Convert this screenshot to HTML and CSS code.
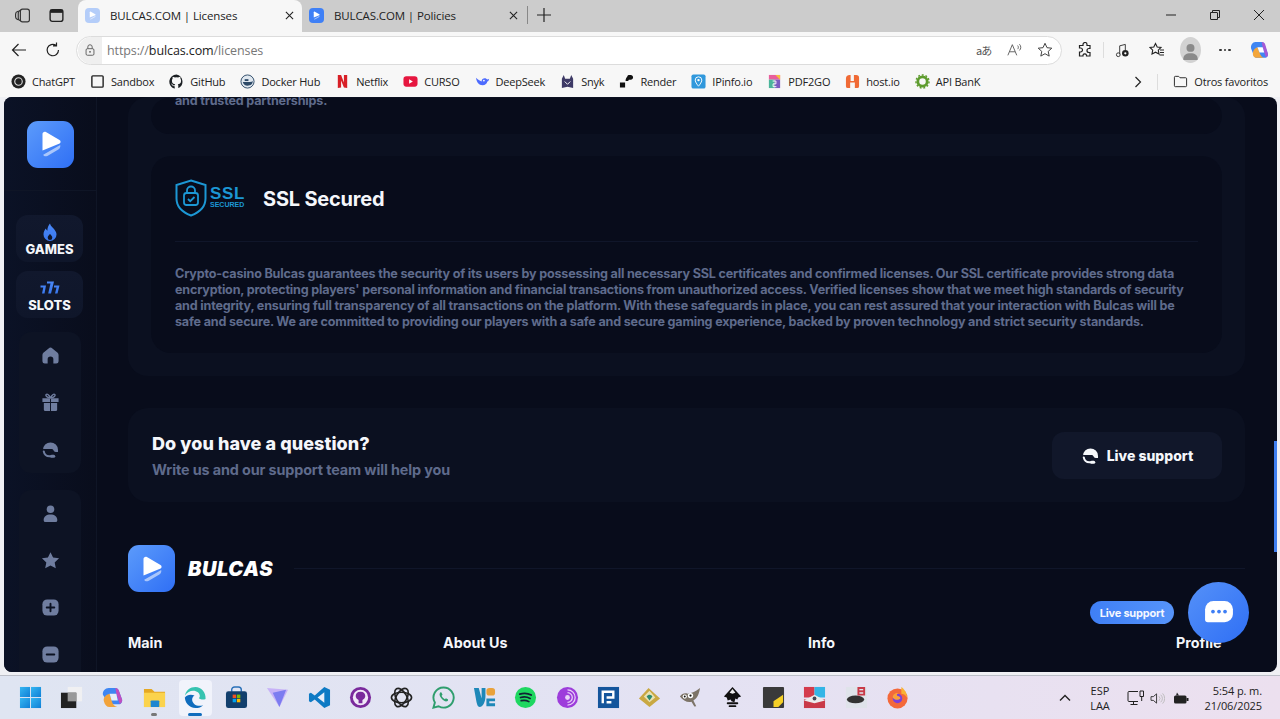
FILE: index.html
```html
<!DOCTYPE html>
<html lang="en">
<head>
<meta charset="utf-8">
<title>BULCAS.COM | Licenses</title>
<link rel="stylesheet" href="styles.css">
</head>
<body>
<svg class="defs" width="0" height="0">
  <defs>
    <linearGradient id="flame" x1="0" y1="0" x2="0" y2="1"><stop offset="0" stop-color="#4a88f7"/><stop offset="1" stop-color="#3a78ee"/></linearGradient>
    <linearGradient id="winlogo" x1="0" y1="0" x2="1" y2="1"><stop offset="0" stop-color="#35b6f2"/><stop offset="1" stop-color="#0f7fd6"/></linearGradient>
    <symbol id="play" viewBox="0 0 24 24">
      <path d="M6 5c0-1.300 1.300-2 2.400-1.400l9.600 5.600c1 .6 1 1.800.1 2.400L6 16.500z" fill="#fff"/>
      <path d="M6.500 19.500 18.500 12.700c.3 1.500-.3 2.600-1.300 3.200l-7.800 4.500c-1.200.7-2.500.2-2.900-.9z" fill="#fff" opacity=".55"/>
    </symbol>
    <symbol id="headset" viewBox="0 0 24 24">
      <path d="M2.500 12.500a9.500 9.500 0 0 1 19 0V15h-2.800c-1.500 0-2.400-1-3.200-2.500-.4-.7-1-1-1.800-1H2.500z" fill="currentColor"/>
      <path d="M3.500 14.500c.5 3.500 3.500 6 7 6h3.500" fill="none" stroke="currentColor" stroke-width="2.600" stroke-linecap="round"/>
      <path d="M11.500 20.500a2 2 0 0 1 2-2h2.500a2 2 0 0 1 0 4h-2.500a2 2 0 0 1-2-2z" fill="currentColor"/>
    </symbol>
  </defs>
</svg>

<header class="tabstrip">
  <svg class="chrome-icon workspaces" viewBox="0 0 16 16"><rect x="6" y="2" width="8.500" height="12" rx="2" fill="none" stroke="#333" stroke-width="1.100"/><path d="M6 3.200C4.700 3.500 4 4.300 4 5.500v5c0 1.200.7 2 2 2.300M3.800 4C2.300 4.500 1.500 5.300 1.500 6.500v3c0 1.200.8 2 2.300 2.500" fill="none" stroke="#333" stroke-width="1.100"/></svg>
  <svg class="chrome-icon tabs-icon" viewBox="0 0 16 16"><rect x="2" y="2.500" width="12" height="11" rx="2" fill="none" stroke="#222" stroke-width="1.300"/><rect x="2" y="2.500" width="12" height="3" fill="#222"/></svg>
  <div class="tab tab-active">
    <span class="favicon favicon-faded"><svg viewBox="0 0 24 24"><use href="#play"/></svg></span>
    <span class="tab-title">BULCAS.COM | Licenses</span>
    <svg class="tab-close" viewBox="0 0 10 10"><path d="M1 1l8 8M9 1l-8 8" stroke="#222" stroke-width="1.200"/></svg>
  </div>
  <div class="tab">
    <span class="favicon"><svg viewBox="0 0 24 24"><use href="#play"/></svg></span>
    <span class="tab-title">BULCAS.COM | Policies</span>
    <svg class="tab-close" viewBox="0 0 10 10"><path d="M1 1l8 8M9 1l-8 8" stroke="#222" stroke-width="1.200"/></svg>
  </div>
  <span class="tab-sep"></span>
  <svg class="new-tab" viewBox="0 0 14 14"><path d="M7 0v14M0 7h14" stroke="#222" stroke-width="1.200"/></svg>
  <div class="window-controls">
    <svg viewBox="0 0 10 10"><path d="M0 5h10" stroke="#222"/></svg>
    <svg viewBox="0 0 10 10"><path d="M.5 2.500h6.500a.5.5 0 0 1 .5.5v6.500H1a.5.5 0 0 1-.5-.5zM2.500 2.500V.5h7v7H7.500" fill="none" stroke="#222"/></svg>
    <svg viewBox="0 0 10 10"><path d="M0 0l10 10M10 0L0 10" stroke="#222"/></svg>
  </div>
</header>

<nav class="toolbar">
  <svg class="tool back" viewBox="0 0 16 16"><path d="M15 8H1.500M7.500 2 1.500 8l6 6" fill="none" stroke="#222" stroke-width="1.200"/></svg>
  <svg class="tool reload" viewBox="0 0 16 16"><path d="M13.500 8A5.700 5.700 0 1 1 11 3.300M11.500 .5v3.300H8" fill="none" stroke="#222" stroke-width="1.200"/></svg>
  <div class="address">
    <span class="lock"><svg viewBox="0 0 16 16"><rect x="3.500" y="6.500" width="9" height="7.500" rx="1.500" fill="none" stroke="#555"/><path d="M5.500 6.500V4.500a2.500 2.500 0 0 1 5 0v2" fill="none" stroke="#555"/><circle cx="8" cy="10" r="1" fill="#555"/></svg></span>
    <span class="url"><span class="url-dim">https://</span>bulcas.com<span class="url-dim">/licenses</span></span>
    <span class="address-tools">
      <span class="translate">aあ</span>
      <svg viewBox="0 0 18 16"><path d="M1 14 6 2l5 12M3 10h6M12 3c1 1 1 3 0 4M14 1.500c2 2 2 5 0 7" fill="none" stroke="#555"/></svg>
      <svg viewBox="0 0 16 16"><path d="M8 1.300l2 4.400 4.800.5-3.600 3.200 1 4.700L8 11.700l-4.200 2.400 1-4.700L1.200 6.200 6 5.700z" fill="none" stroke="#444"/></svg>
    </span>
  </div>
  <svg class="tool ext" viewBox="0 0 16 16"><path d="M6 2.500a2 2 0 0 1 4 0v1h3v3h-1a2 2 0 0 0 0 4h1v3.500H9.500v-1a2 2 0 0 0-3.500 0v1H2.500V10h1a2 2 0 0 0 0-4h-1V3.500H6z" fill="none" stroke="#222" stroke-width="1.200"/></svg>
  <span class="tool-sep"></span>
  <svg class="tool music" viewBox="0 0 16 16"><path d="M5 12V3l6-1.500v6" fill="none" stroke="#333"/><circle cx="3.500" cy="12.500" r="2" fill="none" stroke="#333"/><circle cx="11" cy="11" r="3.500" fill="#222"/><circle cx="11" cy="11" r="1.200" fill="#fff"/></svg>
  <svg class="tool fav" viewBox="0 0 16 16"><path d="M6.500 1.500 8.200 5l3.800.5-2.700 2.700.7 3.800-3.500-1.800L3 12l.7-3.800L1 5.500 4.800 5zM11 8h4M11 10.500h4M10.500 13h4.500" fill="none" stroke="#222" stroke-width="1.100"/></svg>
  <span class="avatar"><svg viewBox="0 0 20 20"><circle cx="10" cy="7.500" r="3.800" fill="#8a8a8a"/><path d="M3 19c0-5 3-6.500 7-6.500s7 1.500 7 6.500z" fill="#8a8a8a"/></svg></span>
  <span class="dots"><i></i><i></i><i></i></span>
  <svg class="tool copilot" viewBox="0 0 20 20"><path d="M6 2h6c2 0 2.500 1 3 2.500L18 13c.6 2-1 4-3 4H8c-2 0-3-1-3.500-2.500L2 8c-.6-3 1.500-6 4-6z" fill="#3f86f2"/><path d="M12 2c2 0 3 1 3.500 2.500L18 13c.3 1.500-.6 3-2 3.500L13 7z" fill="#a45ad6"/><path d="M4 15c1 2 2.500 2 4 2h6c-2-1-3-2-4-5L8 7C5 8 3 11 4 15z" fill="#f3a63c"/><path d="M8 7l5 0 1.500 5H10z" fill="#fff"/></svg>
</nav>

<nav class="bookmarks">
  <a class="bm"><svg viewBox="0 0 16 16"><circle cx="8" cy="8" r="7.500" fill="#222"/><circle cx="8" cy="8" r="4" fill="none" stroke="#ddd" stroke-width="1.200"/></svg>ChatGPT</a>
  <a class="bm"><svg viewBox="0 0 16 16"><rect x="2" y="2" width="12" height="12" rx="1" fill="none" stroke="#222" stroke-width="1.500"/></svg>Sandbox</a>
  <a class="bm"><svg viewBox="0 0 16 16"><path d="M8 .5a7.700 7.700 0 0 0-2.400 15c.4.1.5-.2.5-.4v-2c-2 .4-2.600-1-2.600-1-.4-.9-.9-1.100-.9-1.100-.7-.5 0-.5 0-.5.800 0 1.200.8 1.200.8.700 1.200 1.900.9 2.300.7 0-.5.300-.9.500-1.100-1.700-.2-3.500-.9-3.500-3.800 0-.8.300-1.500.8-2-.1-.2-.3-1 .1-2.100 0 0 .6-.2 2.100.8a7 7 0 0 1 3.800 0c1.500-1 2.100-.8 2.100-.8.400 1.100.2 1.900.1 2.100.5.500.8 1.200.8 2 0 2.900-1.800 3.600-3.500 3.800.3.200.5.700.5 1.400v2.100c0 .2.100.5.500.4A7.700 7.700 0 0 0 8 .5z" fill="#1b1f23"/></svg>GitHub</a>
  <a class="bm"><svg viewBox="0 0 16 16"><circle cx="8" cy="8" r="7" fill="#dfe7ef" stroke="#2d4a68"/><path d="M3 8.500h8c1 0 2-.5 2.500-1 .3 3-2 5-5.500 5-2.500 0-4.500-1.500-5-4z" fill="#2d4a68"/><rect x="5" y="5.500" width="4" height="2" fill="#2d4a68"/></svg>Docker Hub</a>
  <a class="bm"><svg viewBox="0 0 16 16"><path d="M3 1h3.500l3 8V1H13v14l-3.500-.5L6.500 7v7.500L3 15z" fill="#d81f26"/></svg>Netflix</a>
  <a class="bm"><svg viewBox="0 0 16 16"><rect x=".5" y="2.500" width="15" height="11" rx="3" fill="#e6163f"/><path d="M6.500 5.500v5l4-2.500z" fill="#fff"/></svg>CURSO</a>
  <a class="bm"><svg viewBox="0 0 16 16"><path d="M1 4c1 5 3 8 7 8 3 0 5-2 5-4 1 0 2-1 2-3-1 1-2 1-3 0-2-1-5 0-5 3C5 7 3 6 1 4z" fill="#4d6bfe"/><circle cx="9.500" cy="7" r=".9" fill="#fff"/></svg>DeepSeek</a>
  <a class="bm"><svg viewBox="0 0 16 16"><path d="M2 15V5l2-4 1.500 4h5L12 1l2 4v10l-6-1.500z" fill="#3e3a66"/><path d="M5 8l3 3 3-3" fill="none" stroke="#fff"/></svg>Snyk</a>
  <a class="bm"><svg viewBox="0 0 16 16"><path d="M9 2.500C9 1.500 10 1 11 1h1.500C14 1 15 2 15 3.500S14 6 12.500 6H11c-.5 0-1 .5-1 1v.5H7C7 5 8 4 9 2.500zM1 9h5.500v5.500H1z" fill="#111"/></svg>Render</a>
  <a class="bm"><svg viewBox="0 0 16 16"><rect x=".5" y=".5" width="15" height="15" rx="2" fill="#3098dc"/><path d="M8 3a3.500 3.500 0 0 0-3.500 3.500C4.500 9 8 13 8 13s3.500-4 3.500-6.500A3.500 3.500 0 0 0 8 3z" fill="none" stroke="#fff"/><circle cx="8" cy="6.500" r="1.300" fill="#fff"/></svg>IPinfo.io</a>
  <a class="bm"><svg viewBox="0 0 16 16"><rect x="2" y="1" width="12" height="5" fill="#e95f9c"/><rect x="2" y="6" width="6" height="9" fill="#4bb59b"/><rect x="8" y="6" width="6" height="9" fill="#7a5cc0"/><path d="M9 1h5v5z" fill="#f5c23e"/><path d="M6 7.500h3.500v3H6.500v3H10" fill="none" stroke="#fff"/></svg>PDF2GO</a>
  <a class="bm"><svg viewBox="0 0 16 16"><path d="M5.500 15H3a2 2 0 0 1-2-2V5a4 4 0 0 1 4-4h1v6.500h3.500V1H12a3 3 0 0 1 3 3v9a2 2 0 0 1-2 2h-2.500V9h-5z" fill="#f06a35"/></svg>host.io</a>
  <a class="bm"><svg viewBox="0 0 16 16"><circle cx="8" cy="8" r="5" fill="none" stroke="#5e9c2e" stroke-width="3"/><circle cx="8" cy="8" r="7" fill="none" stroke="#5e9c2e" stroke-width="1.500" stroke-dasharray="2 2"/></svg>API BanK</a>
  <div class="bm-end">
    <svg class="bm-chevron" viewBox="0 0 8 12"><path d="M1.500 1l5 5-5 5" fill="none" stroke="#222" stroke-width="1.200"/></svg>
    <span class="bm-sep"></span>
    <a class="bm"><svg viewBox="0 0 16 16"><path d="M1.500 3.500a1 1 0 0 1 1-1h3.500l1.500 1.500h6a1 1 0 0 1 1 1v7.500a1 1 0 0 1-1 1h-11a1 1 0 0 1-1-1z" fill="none" stroke="#222"/></svg>Otros favoritos</a>
  </div>
</nav>

<main class="viewport">
  <aside class="sidebar">
    <div class="side-logo">
      <span class="logo"><svg viewBox="0 0 24 24"><use href="#play"/></svg></span>
    </div>
    <div class="side-nav">
      <a class="big-link">
        <svg viewBox="0 0 16 18"><path d="M8 .5c.5 2.500 2.500 3.500 4 5.500 1.500 2 2.500 3.500 2.500 5.500a6.500 6.500 0 0 1-13 0c0-2.500 1-4.300 2.300-6 .3 1 .8 1.700 1.600 2.200C5.200 5 6.500 2.500 8 .5zM8 11c-1 1.200-2.300 2-2.300 3.700a2.300 2.300 0 0 0 4.600 0C10.300 13 9 12.200 8 11z" fill="url(#flame)" fill-rule="evenodd"/></svg>
        <span>GAMES</span>
      </a>
      <a class="big-link">
        <svg class="sevens" viewBox="0 0 20 15"><path d="M.5 5.500H6L4.500 13.500H2L3.300 7.500H.5zM7 1.500h7l-3 12H8.200L10.500 3.500H7zM14 5.500h5.500L17.500 13.500H15L16.500 7.500H14z" fill="url(#flame)"/></svg>
        <span>SLOTS</span>
      </a>
      <div class="icon-group">
        <svg viewBox="0 0 20 20"><path d="M1.500 9.500c0-1 .4-1.700 1-2.300L8 2.500a3 3 0 0 1 4 0l5.500 4.700c.6.600 1 1.300 1 2.300V16a2.500 2.500 0 0 1-2.500 2.500h-3V14a3 3 0 0 0-6 0v4.500H4A2.500 2.500 0 0 1 1.500 16z" fill="#6f7d9f"/></svg>
        <svg viewBox="0 0 20 20"><path d="M1.500 5.500h8v4h-8zM10.500 5.500h8v4h-8zM3 10.500h6.500V19H4.500A1.500 1.500 0 0 1 3 17.500zM10.500 10.500H17v7a1.500 1.500 0 0 1-1.500 1.500h-5z" fill="#6f7d9f"/><path d="M10 5C8.500 2 6.500.5 5.500 1.500S6 5 10 5c4 0 5.500-2.500 4.500-3.500S11.500 2 10 5z" fill="none" stroke="#6f7d9f" stroke-width="1.400"/></svg>
        <svg viewBox="0 0 24 24"><use href="#headset"/></svg>
      </div>
      <div class="icon-group icon-group-cut">
        <svg viewBox="0 0 20 20"><circle cx="10" cy="5.500" r="4" fill="#6f7d9f"/><path d="M2.800 17c0-4 3-6 7.200-6s7.200 2 7.200 6a2 2 0 0 1-2 2H4.800a2 2 0 0 1-2-2z" fill="#6f7d9f"/></svg>
        <svg viewBox="0 0 20 20"><path d="M10 1.200l2.700 5.700 6.300.8-4.600 4.300 1.200 6.200L10 15.200l-5.600 3 1.200-6.200L1 7.700l6.300-.8z" fill="#6f7d9f"/></svg>
        <svg viewBox="0 0 20 20"><rect x="1.500" y="1.500" width="17" height="17" rx="5" fill="#6f7d9f"/><path d="M10 6v8M6 10h8" stroke="#0c1222" stroke-width="2" stroke-linecap="round"/></svg>
        <svg viewBox="0 0 20 20"><rect x="1.500" y="1.500" width="17" height="17" rx="5" fill="#6f7d9f"/><path d="M6 10h8" stroke="#0c1222" stroke-width="2" stroke-linecap="round"/></svg>
      </div>
    </div>
  </aside>

  <div class="content">
    <section class="panel licenses">
      <article class="card card-prev">
        <p class="card-text">and trusted partnerships.</p>
      </article>
      <article class="card card-ssl">
        <div class="card-head">
          <span class="ssl-badge">
            <svg viewBox="0 0 32 38"><path d="M16 1.500 30.500 6v13.500C30.500 28 24 33.500 16 36.500 8 33.500 1.500 28 1.500 19.500V6z" fill="none" stroke="#1c97d4" stroke-width="2"/><rect x="9" y="14" width="14" height="12" rx="2.500" fill="none" stroke="#1c97d4" stroke-width="1.800"/><path d="M12 14v-2.500a4 4 0 0 1 8 0V14M13 20l2.200 2.200L19.500 18" fill="none" stroke="#1c97d4" stroke-width="1.800"/></svg>
            <span class="ssl-words"><b>SSL</b><small>SECURED</small></span>
          </span>
          <h2>SSL Secured</h2>
        </div>
        <p class="card-text">Crypto-casino Bulcas guarantees the security of its users by possessing all necessary SSL certificates and confirmed licenses. Our SSL certificate provides strong data encryption, protecting players' personal information and financial transactions from unauthorized access. Verified licenses show that we meet high standards of security and integrity, ensuring full transparency of all transactions on the platform. With these safeguards in place, you can rest assured that your interaction with Bulcas will be safe and secure. We are committed to providing our players with a safe and secure gaming experience, backed by proven technology and strict security standards.</p>
      </article>
    </section>

    <section class="panel question">
      <div class="question-text">
        <h3>Do you have a question?</h3>
        <p>Write us and our support team will help you</p>
      </div>
      <a class="support-btn"><svg viewBox="0 0 24 24"><use href="#headset"/></svg>Live support</a>
    </section>

    <div class="brand-row">
      <span class="logo"><svg viewBox="0 0 24 24"><use href="#play"/></svg></span>
      <span class="brand-name">BULCAS</span>
      <span class="brand-line"></span>
    </div>

    <div class="footer-cols">
      <h4>Main</h4>
      <h4>About Us</h4>
      <h4>Info</h4>
      <h4>Profile</h4>
    </div>
  </div>

  <div class="scroll-thumb"></div>
  <span class="chat-pill">Live support</span>
  <span class="chat-fab"><svg viewBox="0 0 32 28"><path d="M10 1h12a9 9 0 0 1 9 9v5a9 9 0 0 1-9 9H4a3 3 0 0 1-3-3V10a9 9 0 0 1 9-9z" fill="#fff"/><circle cx="9.500" cy="12.500" r="2" fill="#3f7ff5"/><circle cx="16" cy="12.500" r="2" fill="#3f7ff5"/><circle cx="22.500" cy="12.500" r="2" fill="#3f7ff5"/></svg></span>
</main>

<footer class="taskbar">
  <div class="task-icons">
    <span class="task"><svg viewBox="0 0 24 24"><g fill="url(#winlogo)"><rect x="1" y="1" width="10.500" height="10.500"/><rect x="12.500" y="1" width="10.500" height="10.500"/><rect x="1" y="12.500" width="10.500" height="10.500"/><rect x="12.500" y="12.500" width="10.500" height="10.500"/></g></svg></span>
    <span class="task"><svg viewBox="0 0 24 24"><rect x="8" y="1" width="15" height="15" fill="#f0f0f2"/><rect x="1" y="7" width="16" height="16" fill="#222"/><rect x="8" y="7" width="9" height="9" fill="#999"/></svg></span>
    <span class="task"><svg viewBox="0 0 24 24"><path d="M8 2h7c2 0 3 1 3.500 2.500L22 14c.6 2.500-1 5-3.500 5H10c-2 0-3-1-3.500-2.500L2 9c-.7-3.500 2.500-7 6-7z" fill="#3f86f2"/><path d="M15 2c2 0 3 1 3.500 2.500L22 14c.4 2-.6 4-2.500 4.800L16 8z" fill="#c04ec0"/><path d="M3 16c1 4 3 6 6 6h8c-3-1-5-3-6-7L9 8C5 9 2 12 3 16z" fill="#f2a33a"/><path d="M9 8h7l1.500 7H11z" fill="#e8f0f8"/></svg></span>
    <span class="task task-open"><svg viewBox="0 0 24 24"><path d="M1 3h8l3 3h11v16H1z" fill="#e5a823"/><rect x="1" y="7" width="22" height="15" fill="#fbd34c"/><rect x="8" y="15" width="9" height="7" rx="1" fill="#1d86d0"/></svg></span>
    <span class="task task-active"><svg viewBox="0 0 24 24"><path d="M22.500 13.500C23 6.500 18 1 12 1 6.500 1 2 4.500 1 10c2-3.500 5.500-5 8.500-5 4 0 7 2.500 7 5.500 0 1-.5 1.800-1 2.300 2 1.500 5 1.700 7 .7z" fill="#36c3b0"/><path d="M1 10c-1 7 4.500 13 11 13 3.500 0 6-1 8-3-6 2-11-1-11.500-5.500-.2-2 .8-3.700 2.500-4.700C7 8.500 3 9 1 12z" fill="#0f6cbd"/></svg></span>
    <span class="task"><svg viewBox="0 0 24 24"><path d="M7 6V4a3 3 0 0 1 3-3h4a3 3 0 0 1 3 3v2" fill="none" stroke="#2a70b8" stroke-width="1.500"/><rect x="1" y="5.500" width="22" height="17.500" rx="2.500" fill="#123f6d"/><rect x="8" y="9" width="3.600" height="3.600" fill="#f25022"/><rect x="12.400" y="9" width="3.600" height="3.600" fill="#7fba00"/><rect x="8" y="13.400" width="3.600" height="3.600" fill="#00a4ef"/><rect x="12.400" y="13.400" width="3.600" height="3.600" fill="#ffb900"/></svg></span>
    <span class="task"><svg viewBox="0 0 24 24"><path d="M1 2l22 2-9 18z" fill="#c7b2f7"/><path d="M7 7l14-3-7 18z" fill="#7c7cf0"/></svg></span>
    <span class="task"><svg viewBox="0 0 24 24"><path d="M17 1l6 3v16l-6 3L7 14l-4 3-2-1V8l2-1 4 3z" fill="#0e7ac4"/><path d="M17 6.500v11L10 12z" fill="#e8eefa"/></svg></span>
    <span class="task"><svg viewBox="0 0 24 24"><circle cx="12" cy="12" r="11" fill="#7a2a9c"/><circle cx="12" cy="12" r="8" fill="#f0e8f7"/><path d="M12 6c-3.500 0-5 2-5 4.500 0 2 1.500 3.500 3 4v3.500h4v-3.500c1.500-.5 3-2 3-4C17 8 15.500 6 12 6z" fill="#7a2a9c"/></svg></span>
    <span class="task"><svg viewBox="0 0 24 24"><g fill="none" stroke="#222" stroke-width="1.700"><ellipse cx="12" cy="12" rx="10.500" ry="5.500"/><ellipse cx="12" cy="12" rx="10.500" ry="5.500" transform="rotate(60 12 12)"/><ellipse cx="12" cy="12" rx="10.500" ry="5.500" transform="rotate(120 12 12)"/></g></svg></span>
    <span class="task"><svg viewBox="0 0 24 24"><path d="M12 1.500a10.500 10.500 0 0 0-9 15.800L1.500 22.500l5.400-1.400A10.500 10.500 0 1 0 12 1.500z" fill="none" stroke="#2f9e6e" stroke-width="2"/><path d="M8.500 7c-1 1-1 3 1 5.500s4.500 4 6 3.500 1.500-2 1-2.300l-2-1-1 1c-1.500-.5-3-2-3.500-3.500l1-1-1-2.200c-.5-.5-1.200-.5-1.500 0z" fill="#2f9e6e"/></svg></span>
    <span class="task"><svg viewBox="0 0 24 24"><path d="M1 2h5l3 11V2h4v9c0 6-3 11-6 11-2 0-3-3-3.500-6z" fill="#1e88b8"/><rect x="14" y="2" width="9" height="8" rx="3" fill="#e9a23b"/><path d="M14 13h9v3h-6v2h6v3h-9z" fill="#1e88b8"/></svg></span>
    <span class="task"><svg viewBox="0 0 24 24"><circle cx="12" cy="12" r="11" fill="#1ed760"/><path d="M6 8.500c4-1.200 8.500-1 12 1M6.800 12c3.500-1 7-.7 10 1M7.500 15.300c3-.8 5.500-.5 8 1" fill="none" stroke="#123" stroke-width="1.800" stroke-linecap="round"/></svg></span>
    <span class="task"><svg viewBox="0 0 24 24"><circle cx="12" cy="12" r="11" fill="#9d3ddb"/><g fill="none" stroke="#e9d4f8" stroke-width="1.300"><path d="M12 4a8 8 0 0 1 0 16M12 7a5 5 0 0 1 0 10"/></g><circle cx="12" cy="12" r="2.500" fill="#e9d4f8"/></svg></span>
    <span class="task"><svg viewBox="0 0 24 24"><rect x="1" y="1" width="22" height="22" fill="#14559c"/><path d="M6 18V6h11v6H10M15 17h-5" fill="none" stroke="#fff" stroke-width="2.500"/></svg></span>
    <span class="task"><svg viewBox="0 0 24 24"><path d="M1 13 11 2l12 11-11 9z" fill="#c9a842"/><path d="M6 11l6-6 6 7-6 5z" fill="#e8e2b4"/><path d="M9 11c2-3 5-2 6 0l-3 4z" fill="#2d8a6f"/></svg></span>
    <span class="task"><svg viewBox="0 0 24 24"><path d="M1 11c2-3 5-4 8-3 3-.5 8-2 13-6-1 6-3 11-7 13l3 6-2 .5-3-5c-4 1-9-1-12-5.500z" fill="#7d7468"/><circle cx="6" cy="11" r="2.200" fill="#fff"/><circle cx="12" cy="10" r="2.800" fill="#fff"/><circle cx="6" cy="11" r="1" fill="#111"/><circle cx="12" cy="10" r="1.200" fill="#111"/></svg></span>
    <span class="task"><svg viewBox="0 0 24 24"><path d="M12 1 21 11l-3 1-1 2-2-1-1 4-3-1-1-2-3 1-1-3-3-1z" fill="#111"/><path d="M12 3l3 4-3 1-3-1z" fill="#eee"/><path d="M7 18h10M9 21h6" stroke="#111" stroke-width="2" stroke-linecap="round"/></svg></span>
    <span class="task"><svg viewBox="0 0 24 24"><rect x="1" y="1" width="22" height="22" rx="1" fill="#3a3a3a"/><path d="M12 22V16l10-7v8l-5 5z" fill="#f6d027"/></svg></span>
    <span class="task"><svg viewBox="0 0 24 24"><rect x="1" y="1" width="11" height="11" fill="#d43b4c"/><rect x="12" y="1" width="11" height="11" fill="#34b5e6"/><rect x="1" y="14" width="22" height="9" fill="#c93a48"/><path d="M1 15 12 9l11 6-11 3z" fill="#ececec"/><circle cx="12" cy="13" r="2" fill="#445"/></svg></span>
    <span class="task"><svg viewBox="0 0 24 24"><rect x="1" y="1" width="22" height="22" fill="#dfe3ea"/><ellipse cx="11" cy="14" rx="9" ry="4" fill="#333"/><path d="M14 2h6v7h-6z" fill="none" stroke="#c93a48" stroke-width="2"/><path d="M14 5.500h6" stroke="#c93a48" stroke-width="2"/></svg></span>
    <span class="task"><svg viewBox="0 0 24 24"><circle cx="12" cy="13" r="10.500" fill="#f4693a"/><path d="M16 1c3 2 6 6 6 11-2-3-4-4-6-4z" fill="#f9b233"/><circle cx="12" cy="13" r="5" fill="#7d40d8"/><path d="M7 12c0-3 3-5 6-4.500-2 .5-2 2-1 3 2 0 3 1 3 2.500-2 2-6 2-8-1z" fill="#f9a13a"/></svg></span>
  </div>
  <div class="tray">
    <svg class="tray-chevron" viewBox="0 0 12 8"><path d="M1 6.500 6 1.500l5 5" fill="none" stroke="#222" stroke-width="1.400"/></svg>
    <span class="lang">ESP<br>LAA</span>
    <svg class="tray-net" viewBox="0 0 18 16"><path d="M11 1.500H2a1 1 0 0 0-1 1v8a1 1 0 0 0 1 1h9M6.500 11.500V14.500M3.500 14.500h7" fill="none" stroke="#222"/><path d="M13 1h3.500v5.500H13zM14.700 6.500V11" fill="none" stroke="#222"/></svg>
    <svg class="tray-vol" viewBox="0 0 16 14"><path d="M1 5h2.500L7 2v10L3.500 9H1z" fill="none" stroke="#333"/><path d="M9.500 4.500a3.500 3.500 0 0 1 0 5M11.500 3a6 6 0 0 1 0 8M13.500 1.500a8 8 0 0 1 0 11" fill="none" stroke="#bbb"/></svg>
    <svg class="tray-bat" viewBox="0 0 16 12"><rect x="1" y="3" width="12.500" height="8" rx="1.500" fill="#222"/><rect x="13.500" y="5.500" width="2" height="3" fill="#222"/><path d="M4 0l-1 3h3z" fill="#222"/></svg>
    <span class="clock">5:54 p. m.<br>21/06/2025</span>
  </div>
</footer>
</body>
</html>
```

FILE: styles.css
```css
* { box-sizing: border-box; }
html, body { margin: 0; height: 100%; }
body {
  width: 1280px;
  height: 719px;
  overflow: hidden;
  display: flex;
  flex-direction: column;
  background: #eff0f4;
  font-family: "Open Sans", "Noto Sans", sans-serif;
  color: #222;
}
svg { display: block; flex: none; }
.defs { position: absolute; }
p, h2, h3, h4 { margin: 0; }

/* tab strip */
.tabstrip {
  height: 32px;
  flex: none;
  display: flex;
  align-items: center;
  background: #cccccc;
  padding-left: 14px;
}
.chrome-icon { width: 17px; height: 17px; margin-bottom: 2px; }
.tabs-icon { margin-left: 17px; }
.tab {
  width: 224px;
  height: 32px;
  display: flex;
  align-items: center;
  padding: 0 7px 2px;
  font-size: 11.500px;
  letter-spacing: -.12px;
}
.tab-active {
  background: #f7f7f7;
  border-radius: 8px 8px 0 0;
  margin-left: 13px;
}
.favicon {
  width: 15px;
  height: 15px;
  border-radius: 4px;
  background: #3f80f6;
  display: flex;
  align-items: center;
  justify-content: center;
}
.favicon svg { width: 11px; height: 11px; }
.favicon-faded { background: #b4cdf9; }
.tab-title { margin-left: 10px; flex: 1; white-space: nowrap; }
.tab-close { width: 9px; height: 9px; margin-right: 1px; }
.tab-sep { width: 1px; height: 18px; background: #888; margin: 0 0 2px 1px; }
.new-tab { width: 14px; height: 14px; margin: 0 0 2px 9px; }
.window-controls {
  margin-left: auto;
  display: flex;
  gap: 34px;
  padding: 0 16px 2px 0;
}
.window-controls svg { width: 10px; height: 10px; }

/* toolbar */
.toolbar {
  height: 34px;
  flex: none;
  display: flex;
  align-items: center;
  background: #f7f7f7;
  padding: 2px 0 0 11px;
}
.tool { width: 16px; height: 16px; }
.reload { margin-left: 18px; }
.address {
  width: 986px;
  height: 29px;
  margin-left: 15px;
  border: 1px solid #dcdcdc;
  border-radius: 15px;
  background: #fff;
  display: flex;
  align-items: center;
}
.lock {
  width: 24px;
  height: 27px;
  border-radius: 14px 0 0 14px;
  background: #efefef;
  display: flex;
  align-items: center;
  justify-content: center;
  margin-left: 1px;
}
.lock svg { width: 14px; height: 14px; }
.url { margin-left: 5px; font-size: 12.500px; color: #222; letter-spacing: -.1px; }
.url-dim { color: #777; }
.address-tools {
  margin-left: auto;
  display: flex;
  align-items: center;
  gap: 14px;
  padding-right: 8px;
  color: #555;
}
.address-tools svg { width: 16px; height: 16px; }
.translate { font-size: 11px; font-family: "Noto Sans CJK JP", sans-serif; width: 17px; letter-spacing: -1px; }
.ext { margin-left: 15px; }
.tool-sep { width: 1px; height: 16px; background: #ddd; margin-left: 10px; }
.music { margin-left: 11px; width: 15px; height: 15px; }
.fav { margin-left: 19px; }
.avatar {
  width: 21px;
  height: 26px;
  border-radius: 50%;
  background: #d2d2d2;
  margin-left: 15px;
  overflow: hidden;
  display: flex;
  align-items: center;
}
.avatar svg { width: 21px; height: 21px; }
.dots { display: flex; gap: 2px; margin-left: 18px; }
.dots i { width: 2.500px; height: 2.500px; border-radius: 50%; background: #333; }
.copilot { margin-left: 18px; width: 21px; height: 21px; }

/* bookmarks */
.bookmarks {
  height: 31px;
  flex: none;
  display: flex;
  align-items: center;
  gap: 15px;
  background: #f7f7f7;
  padding-left: 11px;
  font-size: 11px;
  letter-spacing: -.2px;
}
.bm { display: flex; align-items: center; gap: 6px; white-space: nowrap; }
.bm svg { width: 15px; height: 15px; }
.bm-end { margin-left: auto; display: flex; align-items: center; padding-right: 12px; }
.bm-chevron { width: 8px; height: 12px; }
.bm-sep { width: 1px; height: 16px; background: #ddd; margin: 0 15px; }

/* viewport */
.viewport {
  position: relative;
  flex: none;
  width: 1273px;
  height: 575px;
  margin-left: 4px;
  display: flex;
  overflow: hidden;
  border-radius: 8px;
  background: #080c1b;
  font-family: Inter, "Noto Sans", sans-serif;
}
.sidebar {
  width: 93px;
  flex: none;
  border-right: 1px solid #0f1526;
  background: linear-gradient(90deg, #0b1226, #090d1c);
}
.side-logo {
  height: 94px;
  border-bottom: 1px solid #0f1526;
  display: flex;
  align-items: center;
  justify-content: center;
  padding: 1px 0 0 1px;
}
.logo {
  width: 47px;
  height: 47px;
  flex: none;
  border-radius: 11px;
  background: linear-gradient(135deg, #5c9bfb, #2f6ff5);
  display: flex;
  align-items: center;
  justify-content: center;
}
.logo svg { width: 34px; height: 34px; }
.side-nav {
  display: flex;
  flex-direction: column;
  align-items: center;
  padding: 24px 1px 0 0;
}
.big-link {
  width: 67px;
  height: 47px;
  margin: 0 1px 9px 0;
  border-radius: 12px;
  background: linear-gradient(180deg, #11182d, #0f162a);
  display: flex;
  flex-direction: column;
  align-items: center;
  justify-content: flex-end;
  padding: 0 0 5px 1px;
  color: #f4f6fa;
  font-size: 13px;
  font-weight: 800;
  line-height: 15px;
}
.big-link svg { width: 16px; height: 18px; margin-bottom: 1px; }
.big-link .sevens { width: 20px; height: 15px; margin-bottom: 3px; }
.icon-group {
  width: 62px;
  border-radius: 12px;
  background: #0d1324;
  display: flex;
  flex-direction: column;
  align-items: center;
  gap: 28px;
  padding: 14px 0 14px 2px;
  color: #6f7d9f;
  margin: 5px 0 12px;
}
.icon-group svg { width: 19px; height: 19px; }
.icon-group-cut { padding-bottom: 60px; }

/* content */
.content {
  flex: 1;
  min-width: 0;
  padding: 0 31px;
  display: flex;
  flex-direction: column;
}
.panel {
  width: 1117px;
  flex: none;
  background: #0b1020;
  border-radius: 20px;
}
.licenses {
  height: 279px;
  padding: 0 23px 23px;
  display: flex;
  flex-direction: column;
  gap: 22px;
  justify-content: flex-end;
}
.card {
  flex: none;
  background: #080c1b;
  border-radius: 20px;
  padding: 0 24px;
}
.card-prev { height: 36px; }
.card-text {
  font-size: 12.600px;
  line-height: 16px;
  font-weight: 700;
  color: #5f6b8c;
  letter-spacing: -.19px;
}
.card-prev .card-text { margin-top: -5px; }
.card-ssl { height: 197px; }
.card-head {
  height: 86px;
  border-bottom: 1px solid #10162a;
  display: flex;
  align-items: center;
  margin-bottom: 24px;
}
.ssl-badge { display: flex; align-items: center; gap: 3px; width: 88px; margin-top: -2px; }
.ssl-badge svg { width: 32px; height: 38px; }
.ssl-words { display: flex; flex-direction: column; color: #1c97d4; font-family: "Liberation Sans", sans-serif; }
.ssl-words b { font-size: 17px; line-height: 14px; letter-spacing: .7px; }
.ssl-words small { font-size: 7px; line-height: 8px; font-weight: 700; }
.card-head h2 { font-size: 20px; font-weight: 700; color: #f5f7fb; letter-spacing: -.2px; }
.question {
  margin-top: 32px;
  height: 94px;
  padding: 0 23px 0 24px;
  display: flex;
  align-items: center;
  justify-content: space-between;
}
.question-text { margin-top: 2px; }
.question h3 { font-size: 18px; line-height: 22px; font-weight: 800; color: #f5f7fb; letter-spacing: .07px; }
.question p { font-size: 14.400px; line-height: 20px; margin-top: 5px; font-weight: 700; color: #5f6b8c; letter-spacing: -.13px; }
.support-btn {
  width: 170px;
  height: 47px;
  border-radius: 12px;
  background: #11172a;
  display: flex;
  align-items: center;
  justify-content: center;
  gap: 7px;
  color: #f5f7fb;
  font-size: 14px;
  font-weight: 800;
}
.support-btn svg { width: 19px; height: 19px; }
.brand-row {
  margin-top: 43px;
  display: flex;
  align-items: center;
  width: 1117px;
}
.brand-name {
  margin-left: 13px;
  font-size: 20px;
  font-weight: 900;
  font-style: italic;
  color: #fff;
  letter-spacing: .6px;
}
.brand-line { flex: 1; height: 1px; background: #10162a; margin-left: 21px; }
.footer-cols {
  margin-top: 41px;
  display: grid;
  grid-template-columns: 315px 365px 368px auto;
  color: #f5f7fb;
}
.footer-cols h4 { font-size: 14.300px; line-height: 20px; font-weight: 700; }

/* floating */
.scroll-thumb {
  position: absolute;
  right: 0;
  top: 344px;
  width: 3px;
  height: 111px;
  background: #3f7ff0;
}
.chat-pill {
  position: absolute;
  left: 1086px;
  top: 504px;
  width: 84px;
  height: 23px;
  border-radius: 12px;
  background: linear-gradient(90deg, #3f7ff5, #5694fa);
  color: #f4f7ff;
  font-size: 11px;
  font-weight: 700;
  letter-spacing: -.2px;
  display: flex;
  align-items: center;
  justify-content: center;
}
.chat-fab {
  position: absolute;
  left: 1184px;
  top: 485px;
  width: 61px;
  height: 61px;
  border-radius: 50%;
  background: linear-gradient(135deg, #5591f8, #2f6ff5);
  display: flex;
  align-items: center;
  justify-content: center;
}
.chat-fab svg { width: 32px; height: 26px; }

/* taskbar */
.taskbar {
  margin-top: 3px;
  flex: 1;
  display: flex;
  align-items: center;
  justify-content: space-between;
  background: linear-gradient(90deg, #dfe5f2, #e4e2f3 55%, #ece0ef);
  border-top: 1px solid #bcbfc8;
}
.task-icons { display: flex; gap: 8px; padding-left: 13.500px; }
.task {
  width: 33.300px;
  height: 36px;
  display: flex;
  align-items: center;
  justify-content: center;
  position: relative;
}
.task svg { width: 23px; height: 23px; }
.task-active { background: #f1f3fb; border-radius: 4px; }
.task-active::after, .task-open::after {
  content: "";
  position: absolute;
  bottom: 0;
  left: 50%;
  transform: translateX(-50%);
  height: 2.500px;
  border-radius: 2px;
}
.task-active::after { width: 14px; background: #0f6cbd; }
.task-open::after { width: 6px; background: #777; }
.tray {
  display: flex;
  align-items: center;
  padding: 1px 18px 0 0;
  font-size: 11px;
  line-height: 15.500px;
  color: #222;
}
.tray-chevron { width: 12px; height: 8px; }
.lang { margin-left: 11px; text-align: center; width: 36px; }
.tray-net { width: 18px; height: 16px; margin-left: 9px; }
.tray-vol { width: 15px; height: 13px; margin-left: 5px; }
.tray-bat { width: 16px; height: 13px; margin-left: 8px; }
.clock { margin-left: 11px; text-align: right; width: 62px; letter-spacing: -.1px; }
```
